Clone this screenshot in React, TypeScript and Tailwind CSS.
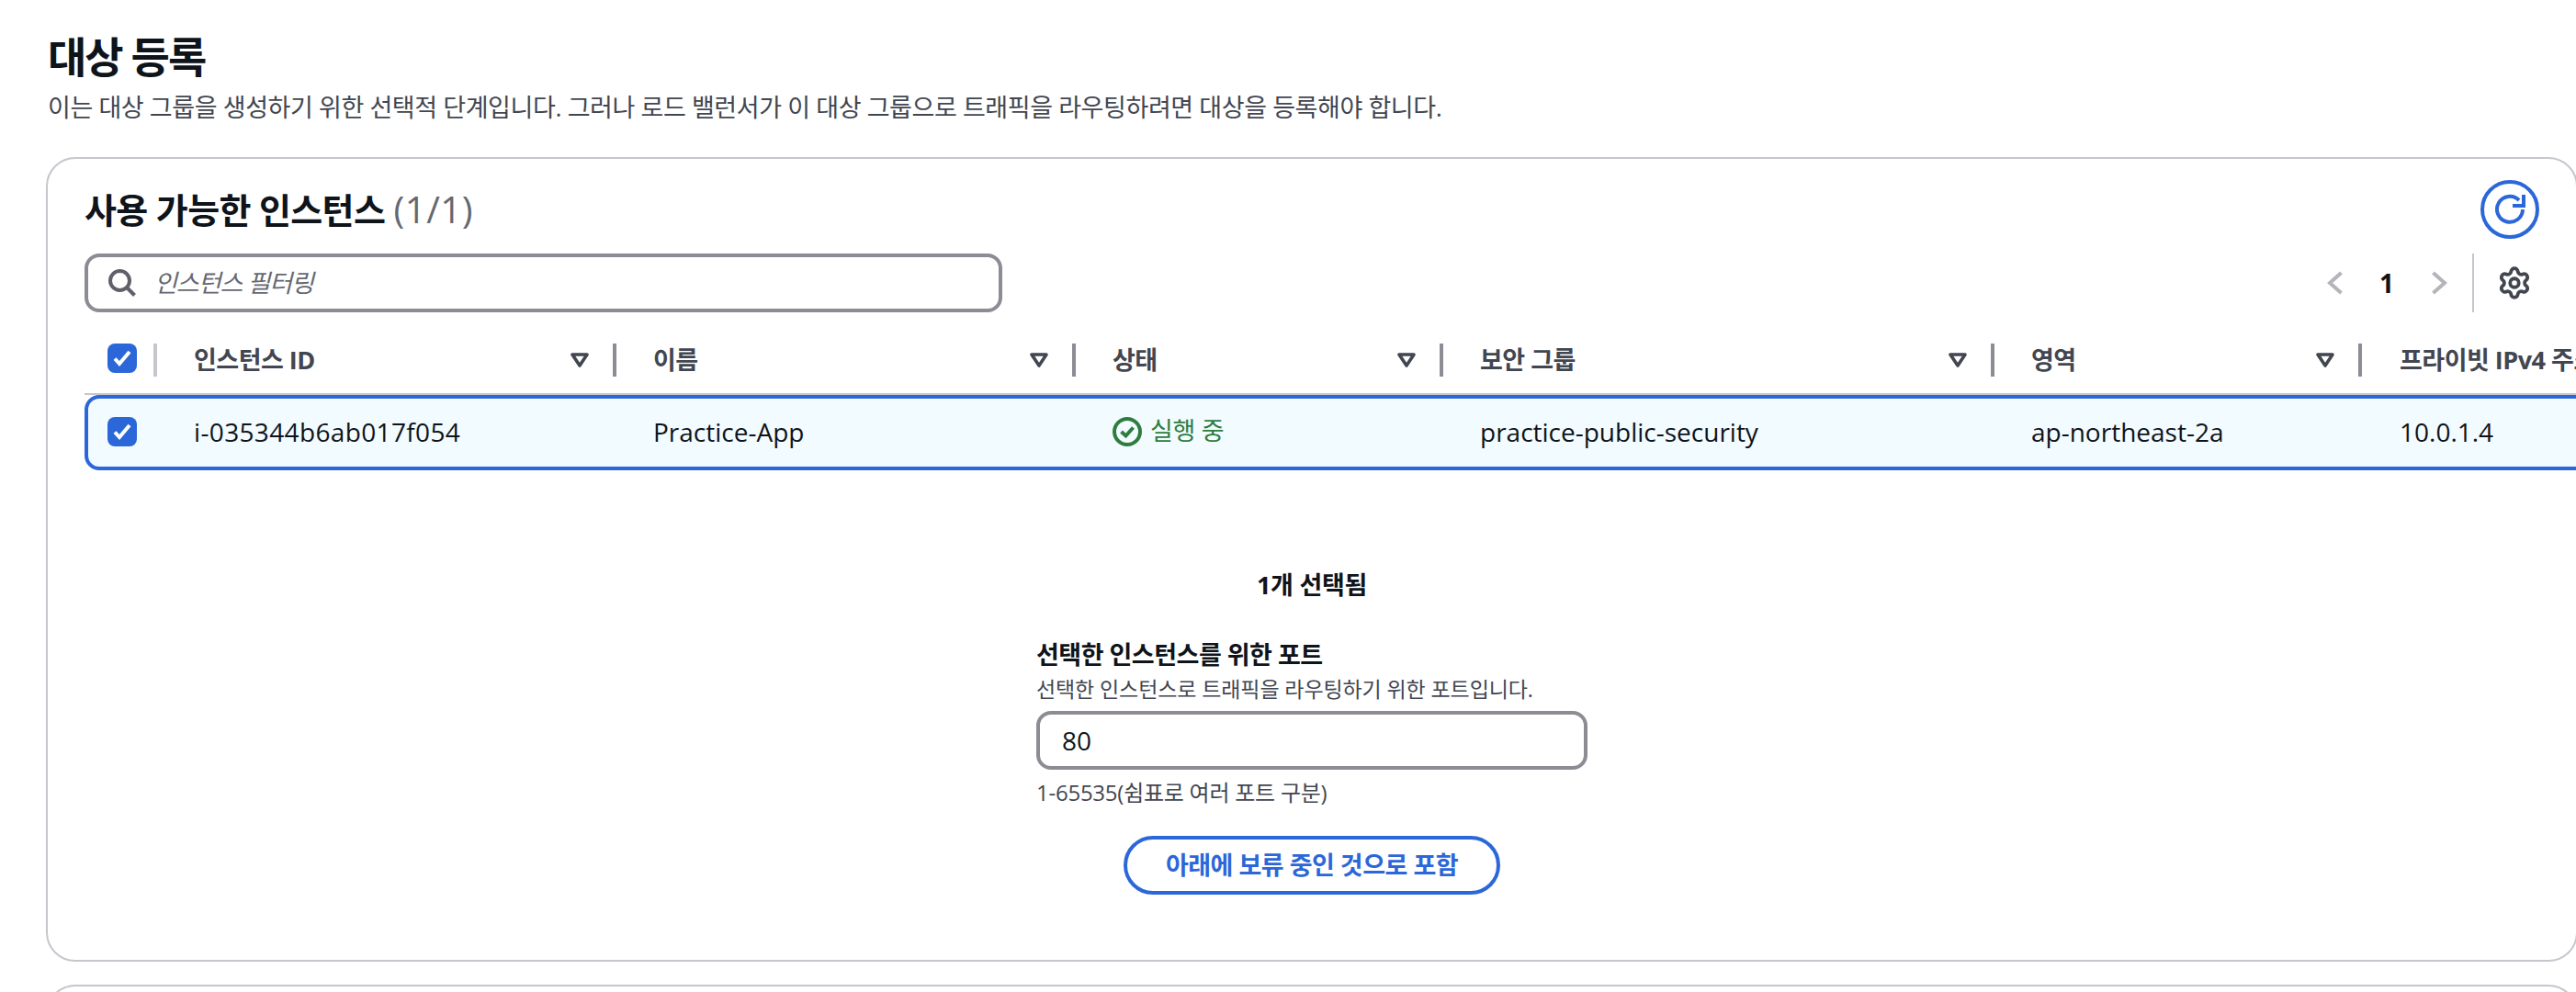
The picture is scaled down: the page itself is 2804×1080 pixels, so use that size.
import { Settings } from "lucide-react";

const columns = [
  { label: "인스턴스 ID", value: "i-035344b6ab017f054", width: "w-[500px]" },
  { label: "이름", value: "Practice-App", width: "w-[500px]" },
  { label: "상태", value: "실행 중", width: "w-[400px]" },
  { label: "보안 그룹", value: "practice-public-security", width: "w-[600px]" },
  { label: "영역", value: "ap-northeast-2a", width: "w-[400px]" },
];

function Checkbox() {
  return (
    <div className="w-8 h-8 rounded-[8px] bg-[#2c67d9] shrink-0">
      <svg width="32" height="32" viewBox="0 0 32 32" fill="none">
        <path d="M8 16.5 13 22 24 9" stroke="#fff" strokeWidth="4" />
      </svg>
    </div>
  );
}

function Caret() {
  return (
    <svg width="20" height="16" viewBox="0 0 20 16" fill="none" className="shrink-0">
      <path d="M2 2h16l-8 12z" stroke="#424650" strokeWidth="3.6" strokeLinejoin="round" />
    </svg>
  );
}

function RunningIcon() {
  return (
    <svg width="32" height="32" viewBox="0 0 32 32" fill="none" className="shrink-0">
      <circle cx="16" cy="16" r="14" stroke="#2e7d3e" strokeWidth="4" />
      <path d="M9.5 16 14.5 20.5 22.5 11.5" stroke="#2e7d3e" strokeWidth="4" />
    </svg>
  );
}

export default function App() {
  return (
    <div className="w-[2804px] h-[1080px] overflow-hidden bg-white text-[#0f141a] font-['Open_Sans','Noto_Sans_CJK_KR',sans-serif]">
      <div className="w-[2756px] ml-[50px] pt-[31px]">
        <h1 className="pl-[2px] text-[46px] tracking-[-2px] leading-[60px] font-bold">대상 등록</h1>
        <p className="pl-[2px] mt-[6px] text-[27px] tracking-[-0.42px] leading-[40px] text-[#424650]">
          이는 대상 그룹을 생성하기 위한 선택적 단계입니다. 그러나 로드 밸런서가 이 대상 그룹으로 트래픽을 라우팅하려면 대상을 등록해야 합니다.
        </p>

        <div className="mt-[34px] h-[876px] border-2 border-[#c6c6cd] rounded-[32px] overflow-hidden px-[40px] pt-[23px]">
          <div className="flex items-center justify-between h-16">
            <h2 className="text-[38px] tracking-[-0.65px] leading-[48px] font-bold">
              사용 가능한 인스턴스 <span className="text-[40px] tracking-[0.5px] font-normal text-[#656871]">(1/1)</span>
            </h2>
            <button className="w-16 h-16 rounded-full border-4 border-[#2c67d9] flex items-center justify-center">
              <svg width="34" height="34" viewBox="0 0 34 34" fill="none">
                <path d="M31 17A14 14 0 1 1 27 7" stroke="#2c67d9" strokeWidth="4" />
                <path d="M32 1v12H20" stroke="#2c67d9" strokeWidth="4" />
              </svg>
            </button>
          </div>

          <div className="flex items-center justify-between mt-4 h-16">
            <div className="w-[999px] h-16 border-4 border-[#8c8c94] rounded-[16px] flex items-center pl-[22px]">
              <svg width="30" height="30" viewBox="0 0 30 30" fill="none" className="shrink-0">
                <circle cx="12.5" cy="12.5" r="10.5" stroke="#5f6068" strokeWidth="4" />
                <path d="M20 20l8.5 8.5" stroke="#5f6068" strokeWidth="4" />
              </svg>
              <span className="ml-[20px] text-[27px] tracking-[-1px] italic text-[#656871]">인스턴스 필터링</span>
            </div>
            <div className="flex items-center h-16">
              <svg width="18" height="26" viewBox="0 0 18 26" fill="none">
                <path d="M15.5 2 3 13l12.5 11" stroke="#b4b4bb" strokeWidth="4" />
              </svg>
              <span className="ml-[35px] w-[24px] text-center text-[28px] font-bold">1</span>
              <svg width="18" height="26" viewBox="0 0 18 26" fill="none" className="ml-[36px]">
                <path d="M2.5 2 15 13 2.5 24" stroke="#b4b4bb" strokeWidth="4" />
              </svg>
              <div className="ml-[27px] w-[2px] h-16 bg-[#c6c6cd]" />
              <Settings size={38} strokeWidth={2.4} className="ml-[25px] mr-[8px] text-[#424650]" />
            </div>
          </div>

          <div className="w-[2800px] mt-[15px]">
            <div className="flex items-center h-[75px] border-b-2 border-[#c6c6cd]">
              <div className="w-[79px] h-9 flex items-start pl-[25px] shrink-0">
                <Checkbox />
                <div className="ml-[18px] w-[4px] h-9 bg-[#c6c6cd]" />
              </div>
              {columns.map((col) => (
                <div key={col.label} className={`${col.width} shrink-0 flex items-center justify-between pl-[40px]`}>
                  <span className="text-[27px] tracking-[-0.5px] leading-9 font-bold text-[#424650]">{col.label}</span>
                  <div className="flex items-center gap-[26px]">
                    <Caret />
                    <div className="w-[4px] h-9 bg-[#8c8c94]" />
                  </div>
                </div>
              ))}
              <div className="pl-[41px] text-[27px] tracking-[-0.5px] leading-9 font-bold text-[#424650] whitespace-nowrap">프라이빗 IPv4 주소</div>
            </div>

            <div className="flex items-center h-[82px] pb-[3px] border-4 border-[#2c67d9] rounded-[16px] bg-[#f2fbff] text-[28px]">
              <div className="w-[75px] pl-[21px] shrink-0">
                <Checkbox />
              </div>
              {columns.map((col, i) => (
                <div key={col.label} className={`${col.width} shrink-0 pl-[40px] flex items-center`}>
                  {i === 0 && <span className="tracking-[0.35px]">{col.value}</span>}
                  {i === 2 && (
                    <span className="flex items-center gap-[9px] text-[27px] tracking-[-0.3px] text-[#2e7d3e]">
                      <RunningIcon />
                      {col.value}
                    </span>
                  )}
                  {i !== 0 && i !== 2 && col.value}
                </div>
              ))}
              <div className="pl-[41px]">10.0.1.4</div>
            </div>
          </div>

          <div className="mt-[105px] flex flex-col items-center">
            <div className="text-[27px] tracking-[-0.3px] leading-10 font-bold">1개 선택됨</div>
            <div className="w-[600px] mt-[38px]">
              <div className="text-[27px] tracking-[-0.5px] leading-9 font-bold">선택한 인스턴스를 위한 포트</div>
              <div className="mt-[1px] text-[23px] tracking-[-0.1px] leading-9 text-[#424650]">선택한 인스턴스로 트래픽을 라우팅하기 위한 포트입니다.</div>
              <div className="mt-[6px] h-16 border-4 border-[#8c8c94] rounded-[16px] flex items-center pl-6 text-[28px]">80</div>
              <div className="mt-[7px] text-[24px] tracking-[-0.25px] leading-9 text-[#424650]">1-65535(쉼표로 여러 포트 구분)</div>
            </div>
            <button className="mt-[29px] w-[410px] h-16 rounded-full border-4 border-[#2c67d9] text-[27px] tracking-[-0.5px] font-bold text-[#2c67d9]">
              아래에 보류 중인 것으로 포함
            </button>
          </div>
        </div>

        <div className="mt-[25px] h-[200px] border-2 border-[#c6c6cd] rounded-[32px]" />
      </div>
    </div>
  );
}
